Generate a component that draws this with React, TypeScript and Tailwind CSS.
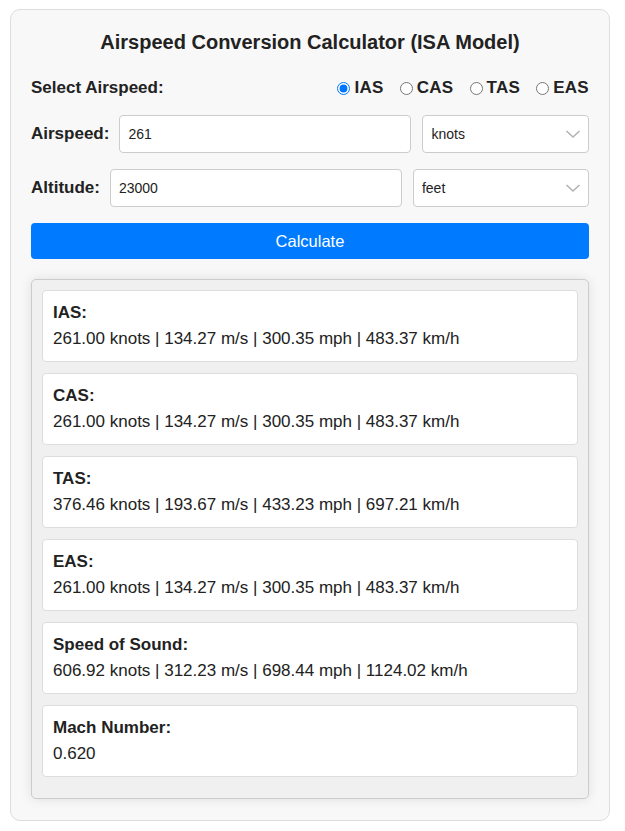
import { useState } from 'react';

const results = [
  { label: 'IAS:', value: '261.00 knots | 134.27 m/s | 300.35 mph | 483.37 km/h' },
  { label: 'CAS:', value: '261.00 knots | 134.27 m/s | 300.35 mph | 483.37 km/h' },
  { label: 'TAS:', value: '376.46 knots | 193.67 m/s | 433.23 mph | 697.21 km/h' },
  { label: 'EAS:', value: '261.00 knots | 134.27 m/s | 300.35 mph | 483.37 km/h' },
  { label: 'Speed of Sound:', value: '606.92 knots | 312.23 m/s | 698.44 mph | 1124.02 km/h' },
  { label: 'Mach Number:', value: '0.620' },
];

const Chevron = () => (
  <svg className="pointer-events-none absolute right-[8px] top-1/2 h-[10px] w-[16px] -translate-y-1/2" viewBox="0 0 16 10" fill="none" stroke="#b3b3b3" strokeWidth={1.6}>
    <path d="M1.5 2l6.5 6 6.5-6" />
  </svg>
);

export default function App() {
  const [mode, setMode] = useState('IAS');

  return (
    <div className="min-h-screen bg-white pt-[9px] pl-[10px]" style={{ fontFamily: '"Liberation Sans", Arial, sans-serif' }}>
      <div className="w-[600px] rounded-[10px] border border-[#dddddd] bg-[#f8f8f8] px-[20px] pt-[20px] pb-[21px] text-[#222]">
        <h2 className="text-center text-[20px] leading-[24px] font-bold text-[#222]">
          Airspeed Conversion Calculator (ISA Model)
        </h2>

        <div className="mt-[24px] flex items-center justify-between text-[17px] leading-[20px] font-bold">
          <span>Select Airspeed:</span>
          <div className="flex items-center gap-[16px]">
            {['IAS', 'CAS', 'TAS', 'EAS'].map((m) => (
              <label key={m} className="flex items-center gap-[4px]">
                <input
                  type="radio"
                  name="mode"
                  checked={mode === m}
                  onChange={() => setMode(m)}
                  className="m-0 h-[13px] w-[13px] accent-[#0075ff]"
                />
                <span className="tracking-[0.3px]">{m}</span>
              </label>
            ))}
          </div>
        </div>

        <div className="mt-[17px] flex items-center gap-[10px]">
          <span className="text-[17px] font-bold">Airspeed:</span>
          <input
            defaultValue="261"
            className="h-[38px] w-[292px] rounded-[4px] border border-[#cccccc] bg-white px-[8px] text-[14px] text-[#222] outline-none"
          />
          <div className="relative ml-px flex-1">
            <select className="h-[38px] w-full appearance-none rounded-[4px] border border-[#cccccc] bg-white px-[8px] text-[14px] text-[#222] outline-none">
              <option>knots</option>
            </select>
            <Chevron />
          </div>
        </div>

        <div className="mt-[16px] flex items-center gap-[10px]">
          <span className="text-[17px] font-bold">Altitude:</span>
          <input
            defaultValue="23000"
            className="h-[38px] w-[292px] rounded-[4px] border border-[#cccccc] bg-white px-[8px] text-[14px] text-[#222] outline-none"
          />
          <div className="relative ml-px flex-1">
            <select className="h-[38px] w-full appearance-none rounded-[4px] border border-[#cccccc] bg-white px-[8px] text-[14px] text-[#222] outline-none">
              <option>feet</option>
            </select>
            <Chevron />
          </div>
        </div>

        <button className="mt-[16px] h-[36px] w-full rounded-[4px] bg-[#007bff] text-[16.5px] text-white">
          Calculate
        </button>

        <div className="mt-[20px] rounded-[5px] border border-[#cccccc] bg-[#f0f0f0] p-[10px] pb-0 shadow-[0_0_12px_rgba(0,0,0,0.1)]">
          {results.map((r) => (
            <div key={r.label} className="mb-[11px] h-[72px] rounded-[4px] border border-[#dddddd] bg-white px-[10px] py-[10px] text-[17px] text-[#222]">
              <div className="mb-[2px] leading-[24px] font-bold">{r.label}</div>
              <div className="leading-[24px]">{r.value}</div>
            </div>
          ))}
          <div className="h-[10px]" />
        </div>
      </div>
    </div>
  );
}
